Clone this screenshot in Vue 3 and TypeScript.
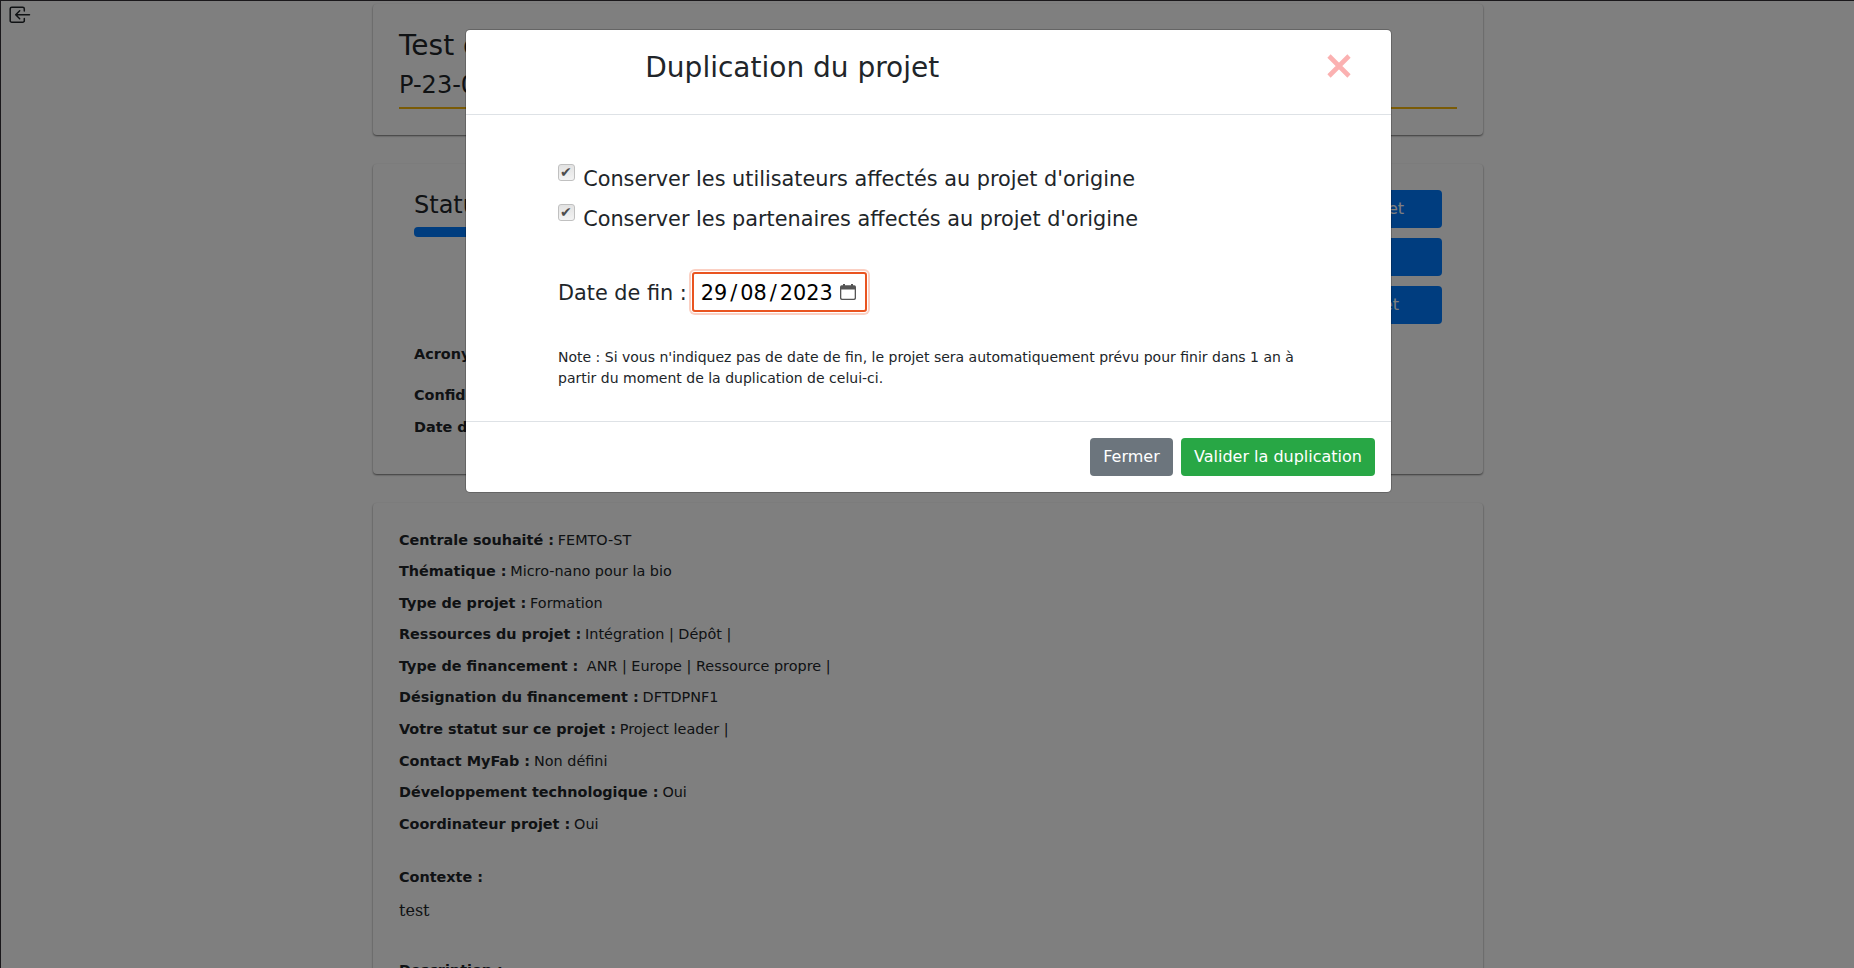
<script setup lang="ts">
interface Detail {
  label: string
  value: string
}

const details: Detail[] = [
  { label: 'Centrale souhaité :', value: 'FEMTO-ST' },
  { label: 'Thématique :', value: 'Micro-nano pour la bio' },
  { label: 'Type de projet :', value: 'Formation' },
  { label: 'Ressources du projet :', value: 'Intégration | Dépôt |' },
  { label: 'Type de financement :', value: '\u00a0ANR | Europe | Ressource propre |' },
  { label: 'Désignation du financement :', value: 'DFTDPNF1' },
  { label: 'Votre statut sur ce projet :', value: 'Project leader |' },
  { label: 'Contact MyFab :', value: 'Non défini' },
  { label: 'Développement technologique :', value: 'Oui' },
  { label: 'Coordinateur projet :', value: 'Oui' },
]

const options: string[] = [
  "Conserver les utilisateurs affectés au projet d'origine",
  "Conserver les partenaires affectés au projet d'origine",
]
</script>

<template>
  <div class="screen">
    <main class="page">
      <svg class="exit" width="22" height="18" viewBox="0 0 22 18" fill="none" stroke="#212529" stroke-width="1.5" stroke-linecap="round" stroke-linejoin="round">
        <path d="M15.3 5V2.8a1.6 1.6 0 0 0-1.6-1.6H2.8a1.6 1.6 0 0 0-1.6 1.6v11.900a1.600 1.600 0 0 0 1.600 1.600h10.900a1.600 1.600 0 0 0 1.600-1.600V12.500" />
        <path d="M20.500 8.700H7M10.700 4.700 6.700 8.700l4 4" />
      </svg>
      <div class="container">
        <section class="card head">
          <h3>Test d</h3>
          <h4>P-23-0</h4>
          <div class="rule"></div>
        </section>
        <section class="card status">
          <div class="summary">
            <h4>Statut</h4>
            <div class="progress"></div>
            <p class="acronym"><b>Acronyme</b></p>
            <p class="confid"><b>Confidentiel</b></p>
            <p><b>Date de</b></p>
          </div>
          <div class="actions">
            <button class="btn blue first">projet</button>
            <button class="btn blue"></button>
            <button class="btn blue third">projet</button>
          </div>
        </section>
        <section class="card details">
          <p v-for="d in details" :key="d.label"><b>{{ d.label }}</b> {{ d.value }}</p>
          <p class="context"><b>Contexte :</b></p>
          <p class="free">test</p>
          <p><b>Description :</b></p>
        </section>
      </div>
    </main>

    <div class="overlay">
      <div class="modal">
        <header>
          <h3>Duplication du projet</h3>
          <svg class="close" width="24" height="24" viewBox="0 0 24 24" stroke="#fbb1b1" stroke-width="4.600">
            <path d="M2 2 22 22M22 2 2 22" />
          </svg>
        </header>
        <div class="body">
          <label v-for="o in options" :key="o" class="option">
            <span class="check">✔</span><span>{{ o }}</span>
          </label>
          <div class="date">
            <span class="caption">Date de fin :</span>
            <div class="field">
              <span>29</span><i>/</i><span>08</span><i>/</i><span>2023</span>
              <svg width="16" height="16" viewBox="0 0 16 16">
                <path fill="#555" fill-rule="evenodd" d="M3 0h2v1.300h6V0h2v1.300h1.200q1.800 0 1.800 1.800v11.100q0 1.800-1.800 1.800H1.800Q0 16 0 14.200V3.100Q0 1.300 1.800 1.300H3zM1.300 5.500v8.200q0 1 1 1h11.400q1 0 1-1V5.500z" />
              </svg>
            </div>
          </div>
          <p class="note">Note : Si vous n'indiquez pas de date de fin, le projet sera automatiquement prévu pour finir dans 1 an à partir du moment de la duplication de celui-ci.</p>
        </div>
        <footer>
          <button class="btn grey">Fermer</button>
          <button class="btn green">Valider la duplication</button>
        </footer>
      </div>
    </div>
  </div>
</template>

<style>
body {
  margin: 0;
  overflow: hidden;
}
</style>

<style scoped>
* {
  box-sizing: border-box;
}
.screen {
  position: relative;
  width: 1854px;
  height: 968px;
  overflow: hidden;
  font: 16px/1.5 "DejaVu Sans", sans-serif;
  color: #212529;
  background: #fff;
}
.page {
  height: 968px;
  padding-top: 4px;
  overflow: hidden;
}
.exit {
  position: absolute;
  left: 9px;
  top: 6px;
}
h3,
h4,
p {
  margin: 0;
  font-weight: 400;
  white-space: nowrap;
}
h3 {
  font-size: 28px;
  line-height: 33.6px;
}
h4 {
  font-size: 24px;
  line-height: 28.8px;
}
.container {
  width: 1110px;
  margin: 0 auto;
  position: relative;
  left: 1px;
}
.card {
  border-radius: 4px;
  margin-bottom: 29px;
  box-shadow: 0 1px 2px rgba(0, 0, 0, 0.55);
}
.head {
  height: 131px;
  padding: 25px 26px 0;
}
.head h3 {
  margin-bottom: 8.400px;
}
.head h4 {
  margin-bottom: 7.200px;
}
.rule {
  height: 2px;
  background: #f5b70c;
}
.status {
  height: 310px;
  padding: 26px 41px 0;
  display: flex;
  justify-content: space-between;
}
.summary {
  width: 500px;
  padding-top: 0.700px;
}
.progress {
  height: 10px;
  margin: 7.500px 0 107.500px;
  border-radius: 4px;
  background: #007bff;
}
.status p,
.details p {
  font-size: 14.400px;
  line-height: 21.600px;
  margin-bottom: 10px;
}
.details p {
  word-spacing: -0.020px;
}
.details b {
  margin-right: -0.700px;
}
.status .acronym {
  margin-bottom: 19px;
}
.status .confid {
  margin-bottom: 10.600px;
}
.actions {
  display: flex;
  flex-direction: column;
  gap: 10px;
  width: 250px;
}
.btn {
  height: 38px;
  padding: 0 13px;
  border: 0;
  border-radius: 4px;
  color: #fff;
  font: 16px/24px "DejaVu Sans", sans-serif;
}
.blue {
  background: #007bff;
  text-align: right;
}
.first {
  padding-right: 38px;
}
.third {
  padding-right: 43px;
}
.details {
  height: 600px;
  padding: 26.500px 26px 0;
}
.details .context {
  margin-top: 31.600px;
}
.details .free {
  font: 16px/24px "DejaVu Serif", serif;
  margin-bottom: 37.500px;
}
.overlay {
  position: absolute;
  inset: 0;
  background: rgba(0, 0, 0, 0.5);
  border-top: 1px solid #1a181b;
  border-left: 1px solid #1a181b;
}
.modal {
  width: 927px;
  height: 464px;
  margin: 28px 0 0 464px;
  border: 1px solid rgba(0, 0, 0, 0.2);
  border-radius: 5px;
  background: #fff;
  background-clip: padding-box;
}
header {
  height: 85px;
  padding: 20.500px 40px 0 179.300px;
  display: flex;
  justify-content: space-between;
  border-bottom: 1px solid #dee2e6;
}
.close {
  margin-top: 3.500px;
}
.body {
  height: 306px;
  padding: 49px 92px 0;
}
.option {
  height: 40px;
  display: flex;
  gap: 8.200px;
  font-size: 20.800px;
  line-height: 31.200px;
  white-space: nowrap;
}
.check {
  width: 17px;
  height: 17px;
  border: 1px solid #c0c0c0;
  border-radius: 3px;
  background: linear-gradient(#e2e2e2, #f3f3f3);
  color: #4d4d4d;
  font-size: 14px;
  line-height: 15px;
  text-indent: 1px;
}
.date {
  display: flex;
  align-items: center;
  margin-top: 28px;
  height: 40px;
  font-size: 20.800px;
  white-space: nowrap;
}
.caption {
  padding-top: 3px;
}
.field {
  display: flex;
  align-items: center;
  width: 175px;
  height: 40px;
  margin-left: 5px;
  padding: 3px 0 0 6px;
  border: 2px solid #e95420;
  border-radius: 3px;
  color: #000;
  box-shadow: 0 0 0 1px #fff, 0 0 0 3px #fbd0c3;
}
.field span {
  padding: 0 1px;
}
.field i {
  font-style: normal;
  padding: 0 2px;
}
.field svg {
  margin: -3px 0 0 6px;
}
.note {
  margin-top: 35px;
  font-size: 14px;
  line-height: 21px;
  white-space: normal;
}
footer {
  height: 71px;
  padding: 16px;
  display: flex;
  justify-content: flex-end;
  gap: 8px;
  border-top: 1px solid #dee2e6;
}
.grey {
  width: 83px;
  background: #6c757d;
}
.green {
  background: #28a745;
}
</style>
